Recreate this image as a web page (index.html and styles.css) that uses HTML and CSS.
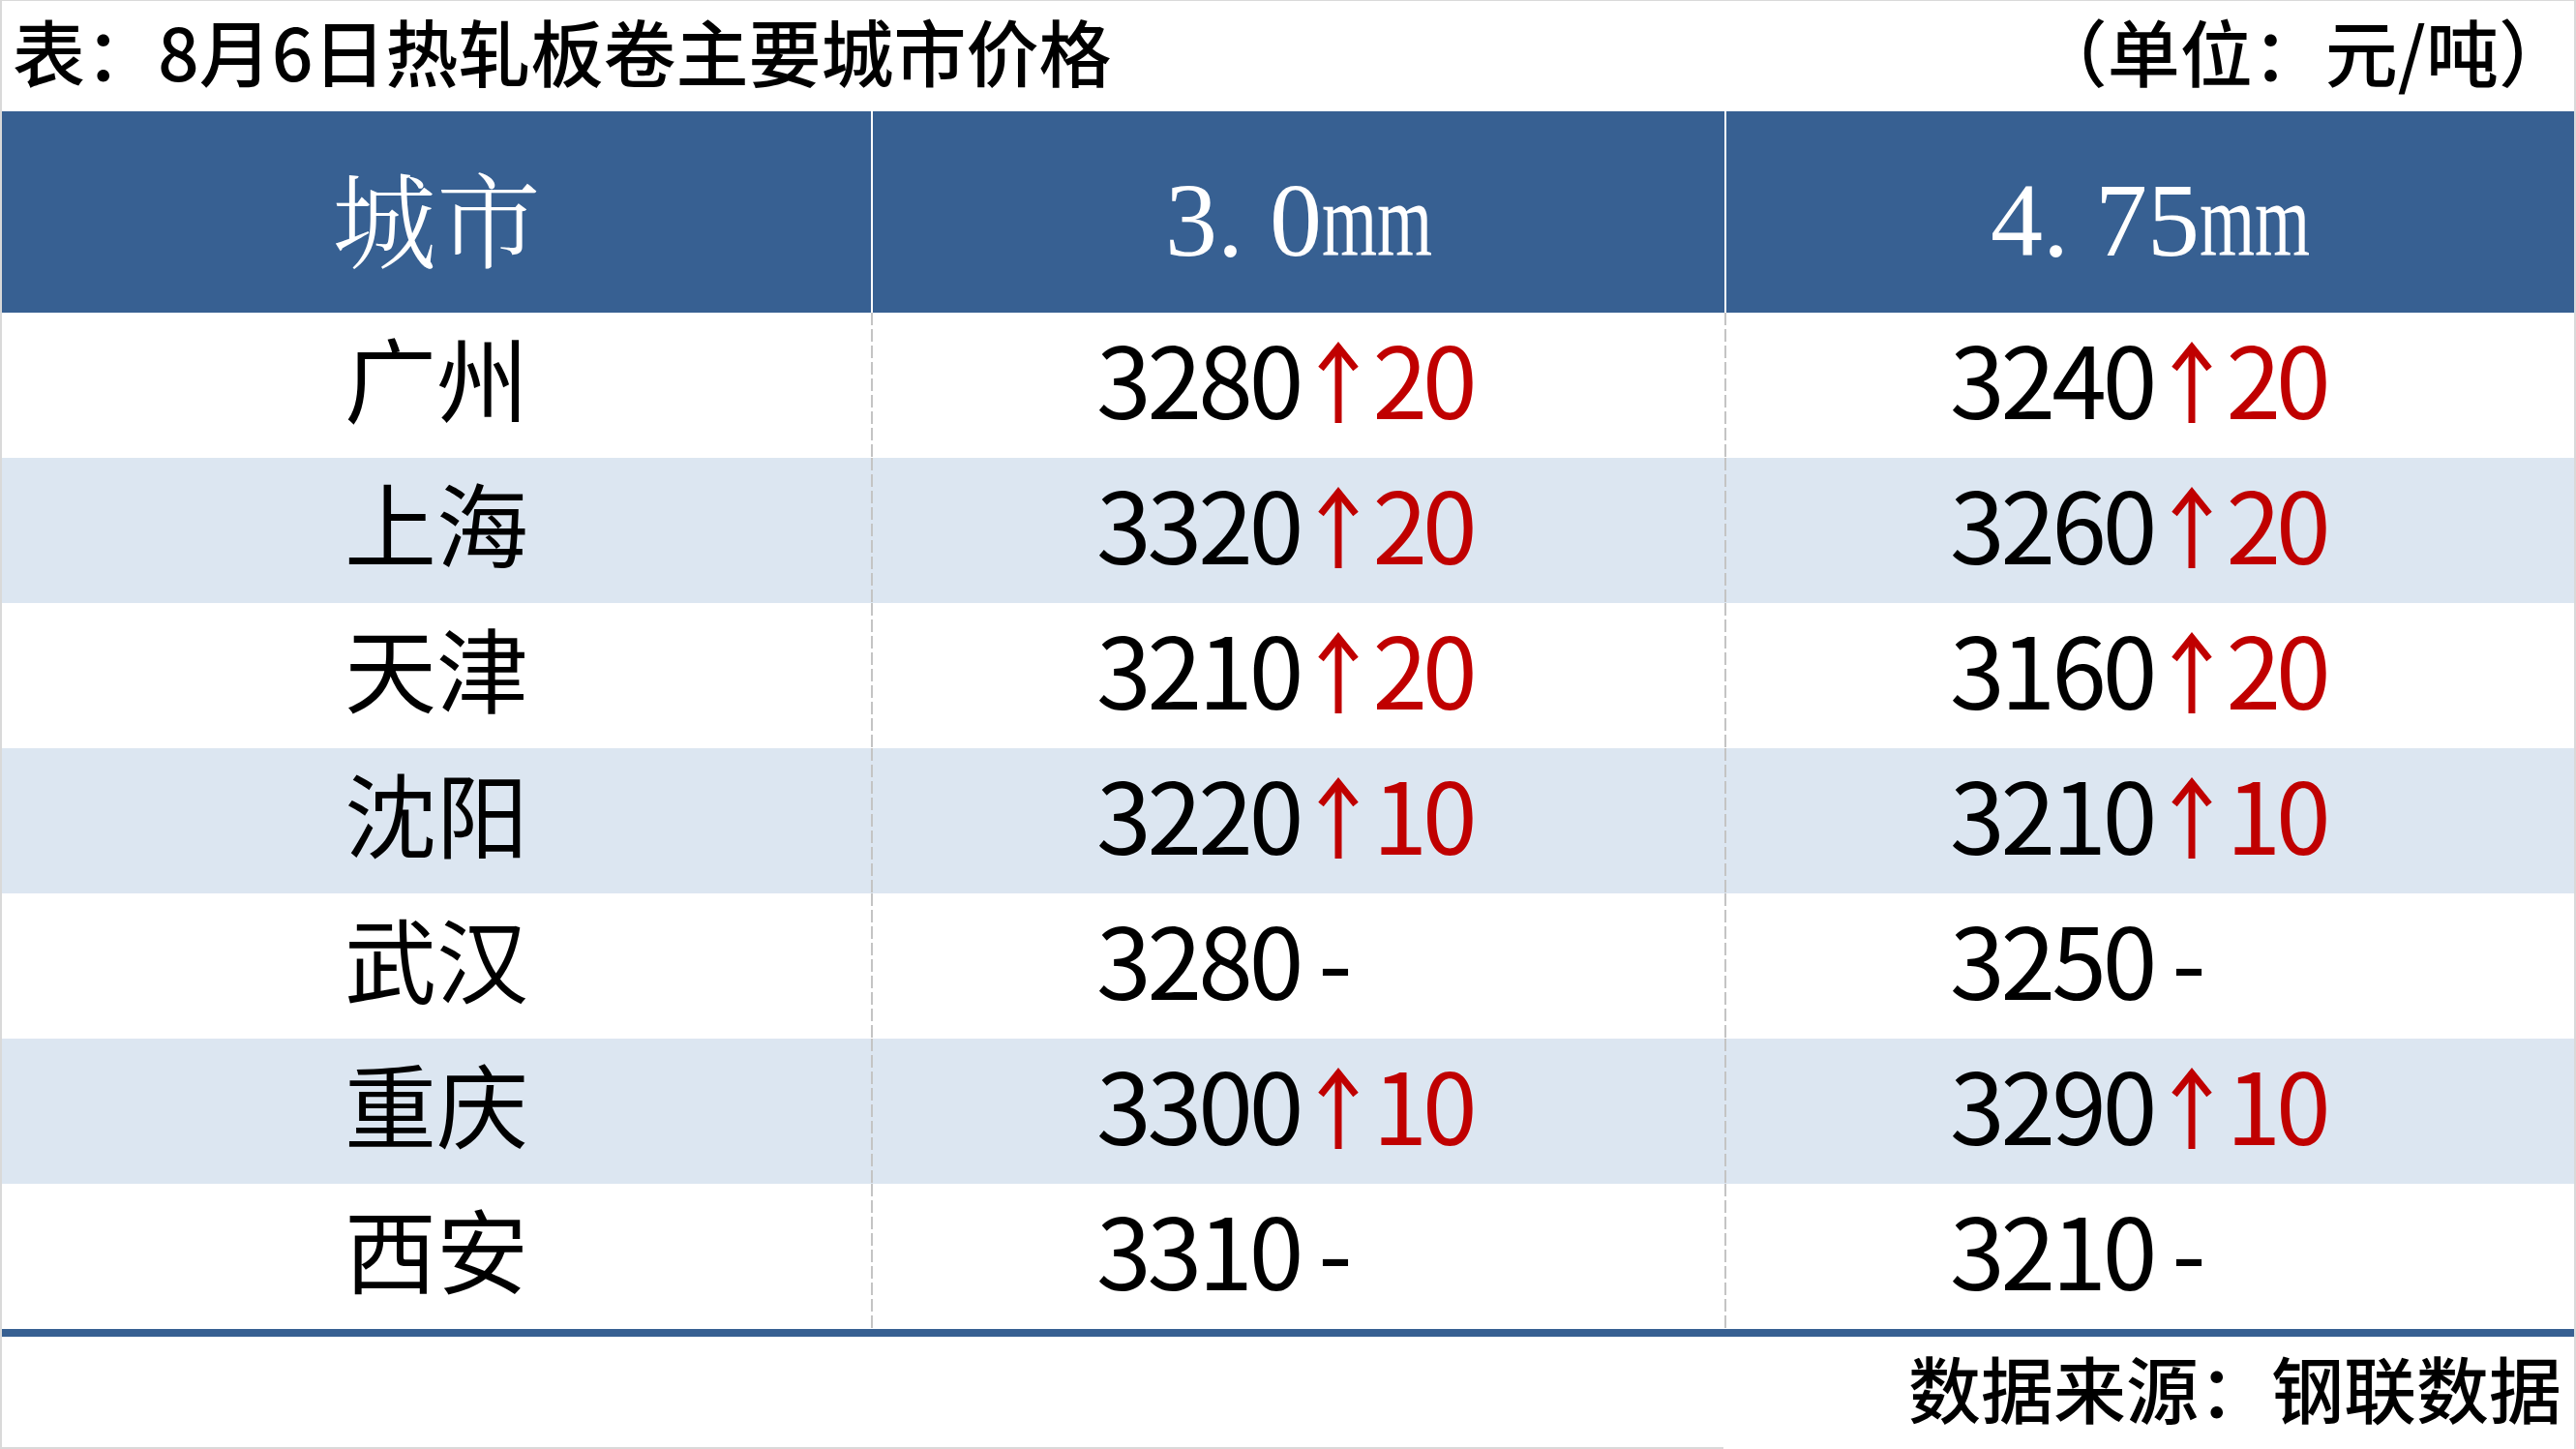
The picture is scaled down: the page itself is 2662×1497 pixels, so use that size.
FILE: index.html
```html
<!DOCTYPE html>
<html lang="zh-CN">
<head>
<meta charset="utf-8">
<title>8月6日热轧板卷主要城市价格</title>
<link rel="stylesheet" href="styles.css">
</head>
<body>
<div class="sheet">
  <div class="caption">
    <span class="caption-title">表：8月6日热轧板卷主要城市价格</span>
    <span class="caption-unit">（单位：元/吨）</span>
  </div>

  <div class="table">
    <div class="row head">
      <div class="cell c1"><span class="head-cjk">城市</span></div>
      <div class="cell c2"><span class="head-num">3<span class="dot">.</span>0<span class="mm">mm</span></span></div>
      <div class="cell c3"><span class="head-num">4<span class="dot">.</span>75<span class="mm">mm</span></span></div>
    </div>

    <div class="row">
      <div class="cell c1">广州</div>
      <div class="cell c2 val"><span class="num">3280</span><svg class="up" viewBox="0 0 42 84"><path d="M3 28 L21 5.6 L39 28"/><rect x="17.5" y="9" width="7" height="75"/></svg><span class="num chg">20</span></div>
      <div class="cell c3 val"><span class="num">3240</span><svg class="up" viewBox="0 0 42 84"><path d="M3 28 L21 5.6 L39 28"/><rect x="17.5" y="9" width="7" height="75"/></svg><span class="num chg">20</span></div>
    </div>

    <div class="row alt">
      <div class="cell c1">上海</div>
      <div class="cell c2 val"><span class="num">3320</span><svg class="up" viewBox="0 0 42 84"><path d="M3 28 L21 5.6 L39 28"/><rect x="17.5" y="9" width="7" height="75"/></svg><span class="num chg">20</span></div>
      <div class="cell c3 val"><span class="num">3260</span><svg class="up" viewBox="0 0 42 84"><path d="M3 28 L21 5.6 L39 28"/><rect x="17.5" y="9" width="7" height="75"/></svg><span class="num chg">20</span></div>
    </div>

    <div class="row">
      <div class="cell c1">天津</div>
      <div class="cell c2 val"><span class="num">3210</span><svg class="up" viewBox="0 0 42 84"><path d="M3 28 L21 5.6 L39 28"/><rect x="17.5" y="9" width="7" height="75"/></svg><span class="num chg">20</span></div>
      <div class="cell c3 val"><span class="num">3160</span><svg class="up" viewBox="0 0 42 84"><path d="M3 28 L21 5.6 L39 28"/><rect x="17.5" y="9" width="7" height="75"/></svg><span class="num chg">20</span></div>
    </div>

    <div class="row alt">
      <div class="cell c1">沈阳</div>
      <div class="cell c2 val"><span class="num">3220</span><svg class="up" viewBox="0 0 42 84"><path d="M3 28 L21 5.6 L39 28"/><rect x="17.5" y="9" width="7" height="75"/></svg><span class="num chg">10</span></div>
      <div class="cell c3 val"><span class="num">3210</span><svg class="up" viewBox="0 0 42 84"><path d="M3 28 L21 5.6 L39 28"/><rect x="17.5" y="9" width="7" height="75"/></svg><span class="num chg">10</span></div>
    </div>

    <div class="row">
      <div class="cell c1">武汉</div>
      <div class="cell c2 val"><span class="num">3280 -</span></div>
      <div class="cell c3 val"><span class="num">3250 -</span></div>
    </div>

    <div class="row alt">
      <div class="cell c1">重庆</div>
      <div class="cell c2 val"><span class="num">3300</span><svg class="up" viewBox="0 0 42 84"><path d="M3 28 L21 5.6 L39 28"/><rect x="17.5" y="9" width="7" height="75"/></svg><span class="num chg">10</span></div>
      <div class="cell c3 val"><span class="num">3290</span><svg class="up" viewBox="0 0 42 84"><path d="M3 28 L21 5.6 L39 28"/><rect x="17.5" y="9" width="7" height="75"/></svg><span class="num chg">10</span></div>
    </div>

    <div class="row">
      <div class="cell c1">西安</div>
      <div class="cell c2 val"><span class="num">3310 -</span></div>
      <div class="cell c3 val"><span class="num">3210 -</span></div>
    </div>
  </div>

  <div class="source">数据来源：钢联数据</div>
</div>
</body>
</html>
```

FILE: styles.css
```css
html, body {
  margin: 0;
  padding: 0;
  background: #ffffff;
}

.sheet {
  width: 2662px;
  height: 1497px;
  box-sizing: border-box;
  border-style: solid;
  border-color: #d9d9d9;
  border-width: 1px 2px 0 2px;
  display: flex;
  flex-direction: column;
  font-family: "Noto Sans CJK SC", "Noto Sans", sans-serif;
  color: #000000;
}

/* ---------- caption ---------- */
.caption {
  height: 114px;
  flex: none;
  box-sizing: border-box;
  display: flex;
  align-items: center;
  justify-content: space-between;
  padding: 0 3px 13px 11px;
  font-size: 75px;
  font-weight: 500;
  line-height: 1.3;
  white-space: nowrap;
}

/* ---------- table ---------- */
.table {
  flex: none;
  border-bottom: 8px solid #376092;
}

.row {
  display: grid;
  grid-template-columns: 898px 882px 878px;
  height: 150px;
  background: #ffffff;
}

.row.alt {
  background: #dce6f1;
}

.row.head {
  height: 208px;
  background: #376092;
  color: #ffffff;
}

.cell {
  display: flex;
  align-items: center;
  box-sizing: border-box;
  line-height: 1.2;
  white-space: nowrap;
}

.row .c1 {
  justify-content: center;
  font-size: 95px;
  padding-bottom: 18px;
}

.row .c2,
.row .c3 {
  background-image: linear-gradient(to bottom, #c4c4c4 0, #c4c4c4 13px, transparent 13px);
  background-size: 2px 17px;
  background-repeat: repeat-y;
  background-position: left top;
}

.val {
  padding-left: 233px;
  padding-bottom: 18px;
}

.num {
  font-size: 102px;
  font-weight: 400;
  letter-spacing: -4px;
}

.num.chg {
  color: #c00000;
  letter-spacing: -5px;
}

.up {
  flex: none;
  width: 42px;
  height: 84px;
  margin: 11px 14px 0 19px;
}

.up path {
  fill: none;
  stroke: #c00000;
  stroke-width: 7;
  stroke-linejoin: miter;
  stroke-miterlimit: 10;
}

.up rect {
  fill: #c00000;
}

/* header cells */
.row.head .c1,
.row.head .c2,
.row.head .c3 {
  background-image: none;
  justify-content: center;
  padding-bottom: 0;
}

.row.head .c1 {
  padding-top: 7px;
}

.row.head .c2,
.row.head .c3 {
  border-left: 2px solid #ffffff;
  padding-top: 17px;
}

.head-cjk {
  font-family: "Noto Serif CJK SC", "Noto Sans CJK SC", serif;
  font-size: 108px;
  font-weight: 300;
}

.head-num {
  font-family: "Liberation Serif", "Times New Roman", serif;
  font-size: 108px;
  font-weight: 400;
}

.head-num .dot {
  letter-spacing: 0.25em;
}

.head-num .mm {
  display: inline-block;
  transform: scaleX(0.68);
  transform-origin: left center;
  margin-right: -0.5em;
}

/* ---------- source ---------- */
.source {
  flex: 1;
  box-sizing: border-box;
  display: flex;
  align-items: center;
  justify-content: flex-end;
  padding: 0 13px 12px 0;
  font-size: 75px;
  font-weight: 500;
  line-height: 1.3;
  white-space: nowrap;
  background-image: linear-gradient(#d9d9d9, #d9d9d9);
  background-repeat: no-repeat;
  background-position: left bottom;
  background-size: 1779px 2px;
}
```
